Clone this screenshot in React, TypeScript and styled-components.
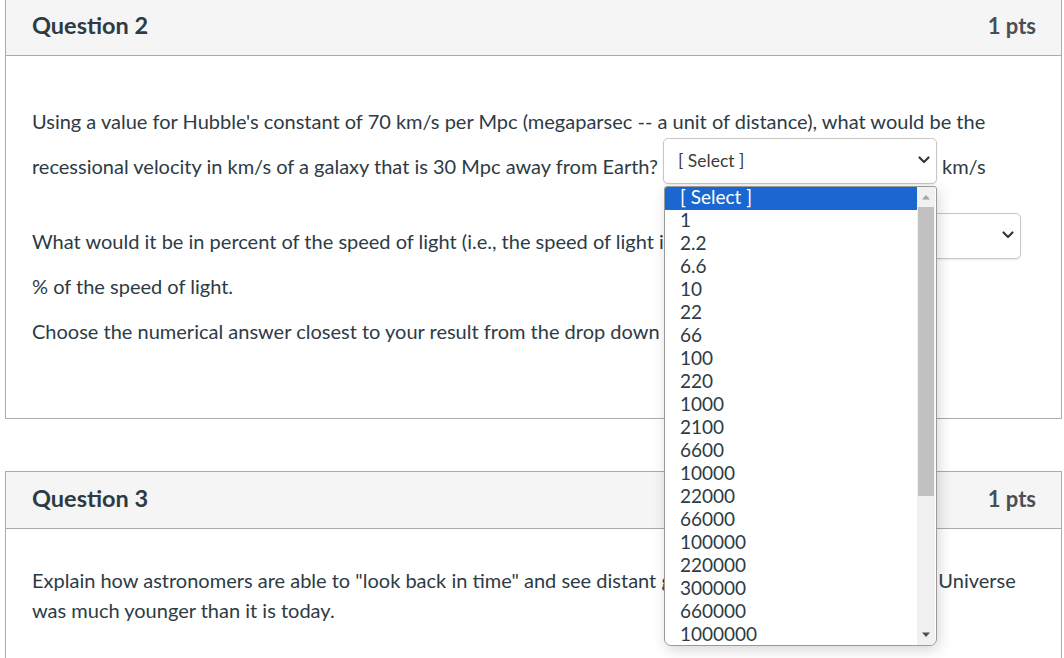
import React from 'react';
import styled, { createGlobalStyle } from 'styled-components';

const GlobalStyle = createGlobalStyle`
    html, body {
        margin: 0;
        padding: 0;
        background: #ffffff;
        overflow: hidden;
    }
    body {
        font-family: Lato, "Liberation Sans", sans-serif;
        color: #2d3b45;
    }
`

const Page = styled.div`
    width: 1064px;
    height: 658px;
    padding-left: 5px;
    box-sizing: border-box;
    overflow: hidden;
`
const Card = styled.section<{ $first?: boolean }>`
    width: 1057px;
    box-sizing: border-box;
    border: 1px solid #ababab;
    margin-top: ${p => (p.$first ? '-2px' : '52px')};
    background: #fff;
`
const Header = styled.header`
    height: 57px;
    box-sizing: border-box;
    background: #f5f5f5;
    border-bottom: 1px solid #ababab;
    display: flex;
    align-items: center;
    justify-content: space-between;
    padding: 0 25px 4px 26px;
`
const Title = styled.h2`
    margin: 0;
    font-size: 23.5px;
    font-weight: 700;
    color: #2d3b45;
`
const Points = styled.span`
    font-size: 22px;
    font-weight: 700;
    color: #4a4f55;
`
const Body = styled.div<{ $top: number; $bottom: number }>`
    padding: ${p => p.$top}px 26px ${p => p.$bottom}px 26px;
    display: flex;
    flex-direction: column;
    align-items: flex-start;
`
const Line = styled.p<{ $gap?: number; $lh?: number }>`
    margin: ${p => p.$gap ?? 0}px 0 0 0;
    font-size: 20px;
    line-height: ${p => p.$lh ?? 27}px;
    white-space: nowrap;
`
const Row = styled.div<{ $gap: number; $width?: number }>`
    margin-top: ${p => p.$gap}px;
    display: flex;
    align-items: center;
    gap: 5px;
    width: ${p => (p.$width ? `${p.$width}px` : 'auto')};
`
const RowText = styled.span`
    font-size: 20px;
    line-height: 27px;
    padding-top: 10px;
    white-space: nowrap;
`
const SelectWrap = styled.div<{ $width?: number }>`
    position: relative;
    flex: ${p => (p.$width ? `0 0 ${p.$width}px` : '1 1 auto')};
`
const SelectBox = styled.div`
    height: 46px;
    box-sizing: border-box;
    border: 1px solid #c7c7c7;
    border-radius: 5px;
    background: #fff;
    box-shadow: 0 1px 2px rgba(0, 0, 0, 0.08);
    display: flex;
    align-items: center;
    justify-content: space-between;
    padding: 0 5px 2px 14px;
    font-size: 17.5px;
    color: #3b3b3b;
`
const OptionList = styled.div`
    position: absolute;
    top: calc(100% + 2px);
    left: 1px;
    width: 273px;
    height: 460px;
    box-sizing: border-box;
    border: 1px solid #9a9a9a;
    border-radius: 3px 3px 7px 7px;
    background: #fff;
    box-shadow: 2px 4px 14px rgba(0, 0, 0, 0.16);
    display: flex;
    overflow: hidden;
    z-index: 5;
`
const Options = styled.ul`
    list-style: none;
    margin: 0;
    padding: 0;
    flex: 1;
`
const Option = styled.li<{ $active?: boolean }>`
    height: 23px;
    line-height: 20px;
    padding-left: 15px;
    font-size: 19px;
    color: ${p => (p.$active ? '#ffffff' : '#2d3b45')};
    background: ${p => (p.$active ? '#1a67d2' : 'transparent')};
`
const Scrollbar = styled.div`
    width: 18px;
    margin-right: 1px;
    background: #f1f1f1;
    display: flex;
    flex-direction: column;
    align-items: center;
`
const ScrollArrow = styled.div`
    height: 20px;
    display: flex;
    align-items: center;
    justify-content: center;
`
const Thumb = styled.div`
    width: 16px;
    height: 289px;
    background: #c1c1c1;
`
const Track = styled.div`
    flex: 1;
`

const Chevron = () => (
    <svg width="14" height="10" viewBox="0 0 14 10">
        <path d="M2.5 2.5 L7 7 L11.5 2.5" fill="none" stroke="#2d3b45" strokeWidth="2.2" strokeLinecap="round" strokeLinejoin="round" />
    </svg>
)

const Triangle = ({ up, color }: { up?: boolean; color: string }) => (
    <svg width="10" height="6" viewBox="0 0 10 6">
        <path d={up ? 'M1 5.5 L5 1 L9 5.5 Z' : 'M1 0.5 L5 5 L9 0.5 Z'} fill={color} />
    </svg>
)

const values = ['1', '2.2', '6.6', '10', '22', '66', '100', '220', '1000', '2100', '6600', '10000', '22000', '66000', '100000', '220000', '300000', '660000', '1000000']

export default function App() {
    return (
        <Page>
            <GlobalStyle />
            <Card $first>
                <Header>
                    <Title>Question 2</Title>
                    <Points>1 pts</Points>
                </Header>
                <Body $top={52} $bottom={73}>
                    <Line>Using a value for Hubble's constant of 70 km/s per Mpc (megaparsec -- a unit of distance), what would be the</Line>
                    <Row $gap={3}>
                        <RowText>recessional velocity in km/s of a galaxy that is 30 Mpc away from Earth?</RowText>
                        <SelectWrap $width={274}>
                            <SelectBox>
                                <span>[ Select ]</span>
                                <Chevron />
                            </SelectBox>
                            <OptionList>
                                <Options>
                                    <Option $active>[ Select ]</Option>
                                    {values.map(v => (
                                        <Option key={v}>{v}</Option>
                                    ))}
                                </Options>
                                <Scrollbar>
                                    <ScrollArrow><Triangle up color="#a3a3a3" /></ScrollArrow>
                                    <Thumb />
                                    <Track />
                                    <ScrollArrow><Triangle color="#505050" /></ScrollArrow>
                                </Scrollbar>
                            </OptionList>
                        </SelectWrap>
                        <RowText>km/s</RowText>
                    </Row>
                    <Row $gap={29} $width={989}>
                        <RowText>What would it be in percent of the speed of light (i.e., the speed of light is 300,000 km/s)?</RowText>
                        <SelectWrap>
                            <SelectBox>
                                <span></span>
                                <Chevron />
                            </SelectBox>
                        </SelectWrap>
                    </Row>
                    <Line $gap={14}>% of the speed of light.</Line>
                    <Line $gap={18}>Choose the numerical answer closest to your result from the drop down menu.</Line>
                </Body>
            </Card>
            <Card>
                <Header>
                    <Title>Question 3</Title>
                    <Points>1 pts</Points>
                </Header>
                <Body $top={36} $bottom={40}>
                    <Line $lh={30}>Explain how astronomers are able to "look back in time" and see distant galaxies as they were when the Universe</Line>
                    <Line $lh={30}>was much younger than it is today.</Line>
                </Body>
            </Card>
        </Page>
    )
}
